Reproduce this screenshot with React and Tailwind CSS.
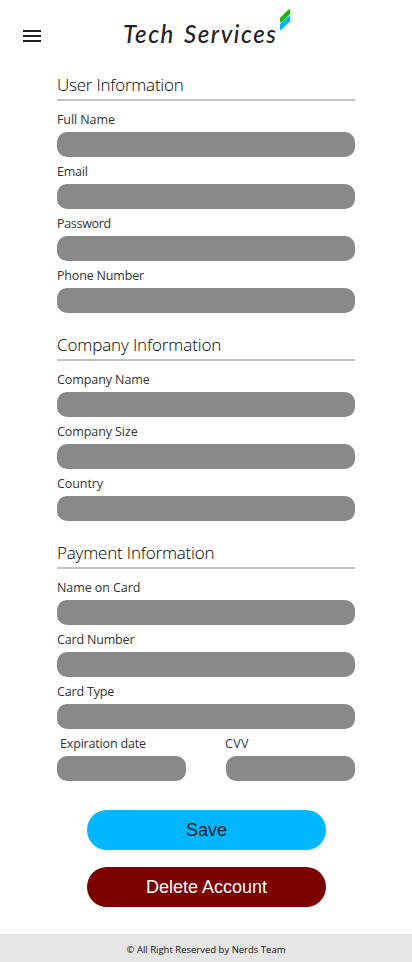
function Field({ label, labelClass = "tracking-[-0.08px]" }) {
  return (
    <label className="block">
      <span className={`block h-[27px] text-[12.5px] leading-[30px] font-normal whitespace-nowrap text-[#333] ${labelClass}`}>{label}</span>
      <input className="block h-[25px] w-full rounded-[10px] bg-[#898989] px-2 text-[13px] outline-none" />
    </label>
  );
}

function Section({ title, titleClass, children }) {
  return (
    <section className="mb-5">
      <h2 className={`mb-1 h-7 border-b-2 border-[#c1c1c1] text-[17px] leading-6 font-light whitespace-nowrap text-black ${titleClass}`}>{title}</h2>
      {children}
    </section>
  );
}

function Logo() {
  return (
    <div className="flex items-start">
      <span className="mt-[18px] block w-[156px] text-[24px] leading-8 font-medium tracking-[1.55px] [word-spacing:2px] whitespace-nowrap text-[#222] italic font-['Ink_Free','Segoe_Print','Lato',sans-serif]">
        Tech Services
      </span>
      <svg className="mt-[9px] h-[22px] w-3" viewBox="0 0 12 22">
        <path d="M1 9 8.8 1.2Q11.3 -.8 11.3 1.8V4.8L3.5 12.4Q1 14.6 1 12.4Z" fill="#20b500" />
        <path d="M1 15.3 9 7.8Q11.3 6 11.3 8v4.2L3 20Q1 22.5 1 20Z" fill="#00b7ff" />
      </svg>
    </div>
  );
}

export default function App() {
  return (
    <div className="flex h-[962px] w-full flex-col bg-white font-['Open_Sans','Noto_Sans',sans-serif] font-light text-[#111]">
      <header className="flex h-[73px] shrink-0 items-start">
        <button aria-label="Menu" className="mt-[30px] ml-[23px] mr-[82px] flex w-[18px] flex-col gap-[3px]">
          <span className="h-0.5 w-full bg-[#222]" />
          <span className="h-0.5 w-full bg-[#222]" />
          <span className="h-0.5 w-full bg-[#222]" />
        </button>
        <Logo />
      </header>
      <main className="ml-[57px] w-[298px] grow">
        <Section title="User Information" titleClass="tracking-[-0.22px]">
          <Field label="Full Name" />
          <Field label="Email" labelClass="tracking-[-0.2px]" />
          <Field label="Password" labelClass="tracking-[-0.3px]" />
          <Field label="Phone Number" labelClass="tracking-[-0.17px]" />
        </Section>
        <Section title="Company Information" titleClass="tracking-[-0.12px]">
          <Field label="Company Name" />
          <Field label="Company Size" />
          <Field label="Country" />
        </Section>
        <Section title="Payment Information" titleClass="tracking-[-0.18px]">
          <Field label="Name on Card" />
          <Field label="Card Number" labelClass="tracking-[-0.17px]" />
          <Field label="Card Type" labelClass="tracking-[-0.17px]" />
          <div className="grid grid-cols-2 gap-10">
            <Field label="Expiration date" labelClass="ml-[3px] tracking-[-0.17px]" />
            <Field label="CVV" labelClass="-ml-px tracking-[0.3px]" />
          </div>
        </Section>
        <div className="mt-[29px] ml-[30px] flex w-[239px] flex-col gap-[17px] font-['Liberation_Sans',Arial,sans-serif] text-[18px] font-normal">
          <button className="h-10 rounded-full bg-[#00b7ff] text-[#222]">Save</button>
          <button className="h-10 rounded-full bg-[#7b0000] text-white">Delete Account</button>
        </div>
      </main>
      <footer className="h-7 shrink-0 bg-[#e5e5e5] text-center text-[9.5px] leading-[31px] font-normal">
        © All Right Reserved by Nerds Team
      </footer>
    </div>
  );
}
